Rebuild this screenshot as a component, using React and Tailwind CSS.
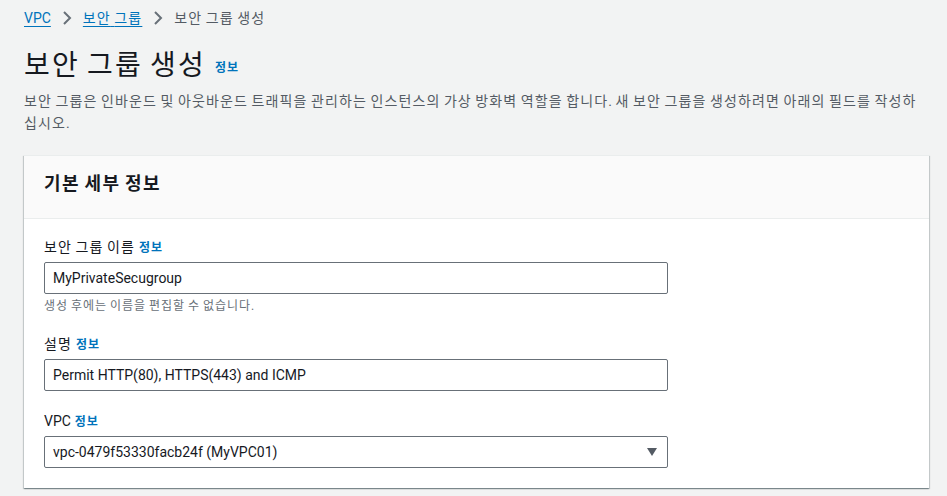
import React from "react";

const FONT = { fontFamily: "Roboto, 'Noto Sans CJK KR', sans-serif" };

function K({ children }) {
  const parts = String(children).split(/([\uAC00-\uD7A3]+)/);
  return (
    <>
      {parts.map((p, i) =>
        /[\uAC00-\uD7A3]/.test(p) ? (
          <span key={i} className="tracking-[0.08em]">
            {p}
          </span>
        ) : (
          <React.Fragment key={i}>{p}</React.Fragment>
        )
      )}
    </>
  );
}

function Chevron() {
  return (
    <svg width="16" height="16" viewBox="0 0 16 16" className="shrink-0">
      <path d="M5 2l6 6-6 6" fill="none" stroke="#687078" strokeWidth="2" />
    </svg>
  );
}

function Info() {
  return (
    <span className="ml-1 text-[12px] font-bold text-[#0073bb]">
      <K>정보</K>
    </span>
  );
}

function Field({ label, children, hint }) {
  return (
    <div className="flex flex-col">
      <div className="text-[14px] leading-5 text-[#16191f]">
        <K>{label}</K>
        <Info />
      </div>
      <div className="mt-1">{children}</div>
      {hint && (
        <div className="mt-1 text-[12px] leading-4 text-[#687078]">
          <K>{hint}</K>
        </div>
      )}
    </div>
  );
}

function Input({ value }) {
  return (
    <div className="flex h-8 w-[624px] items-center rounded-[2px] border border-[#687078] bg-white px-2 text-[14px] text-[#16191f]">
      {value}
    </div>
  );
}

export default function App() {
  return (
    <div className="min-h-[496px] bg-[#f2f3f3] pl-6 pr-[18px] pt-2" style={FONT}>
      <nav className="flex h-5 items-center gap-2 text-[14px] leading-5">
        <span className="text-[#0073bb] underline underline-offset-[3px]">VPC</span>
        <Chevron />
        <span className="text-[#0073bb] underline underline-offset-[3px]">
          <K>보안 그룹</K>
        </span>
        <Chevron />
        <span className="text-[#545b64]">
          <K>보안 그룹 생성</K>
        </span>
      </nav>
      <div className="mt-5 flex items-baseline">
        <h1 className="text-[28px] font-normal leading-9 text-[#16191f]">
          <K>보안 그룹 생성</K>
        </h1>
        <span className="relative -top-[3px] ml-[9px] text-[12px] font-bold text-[#0073bb]">
          <K>정보</K>
        </span>
      </div>
      <p className="mt-1.5 text-[14px] leading-[22px] text-[#545b64]">
        <K>
          보안 그룹은 인바운드 및 아웃바운드 트래픽을 관리하는 인스턴스의 가상 방화벽 역할을 합니다. 새 보안 그룹을 생성하려면 아래의 필드를 작성하십시오.
        </K>
      </p>
      <section className="mt-[21px] border-t border-[#eaeded] bg-white shadow-[0_1px_1px_0_rgba(0,28,36,0.3),1px_1px_1px_0_rgba(0,28,36,0.15),-1px_1px_1px_0_rgba(0,28,36,0.15)]">
        <div className="border-b border-[#eaeded] bg-[#fafafa] px-5 pb-[22px] pt-4">
          <h2 className="text-[18px] font-bold leading-6 text-[#16191f]">
            <K>기본 세부 정보</K>
          </h2>
        </div>
        <div className="flex flex-col gap-5 px-5 pb-5 pt-[18px]">
          <Field label="보안 그룹 이름" hint="생성 후에는 이름을 편집할 수 없습니다.">
            <Input value="MyPrivateSecugroup" />
          </Field>
          <Field label="설명">
            <Input value="Permit HTTP(80), HTTPS(443) and ICMP" />
          </Field>
          <Field label="VPC">
            <div className="flex h-8 w-[624px] items-center justify-between rounded-[2px] border border-[#687078] bg-white pl-2 pr-[10px] text-[14px] text-[#16191f]">
              <span>vpc-0479f53330facb24f (MyVPC01)</span>
              <svg width="10" height="8" viewBox="0 0 10 8">
                <path d="M0 0h10L5 8z" fill="#545b64" />
              </svg>
            </div>
          </Field>
        </div>
      </section>
    </div>
  );
}
